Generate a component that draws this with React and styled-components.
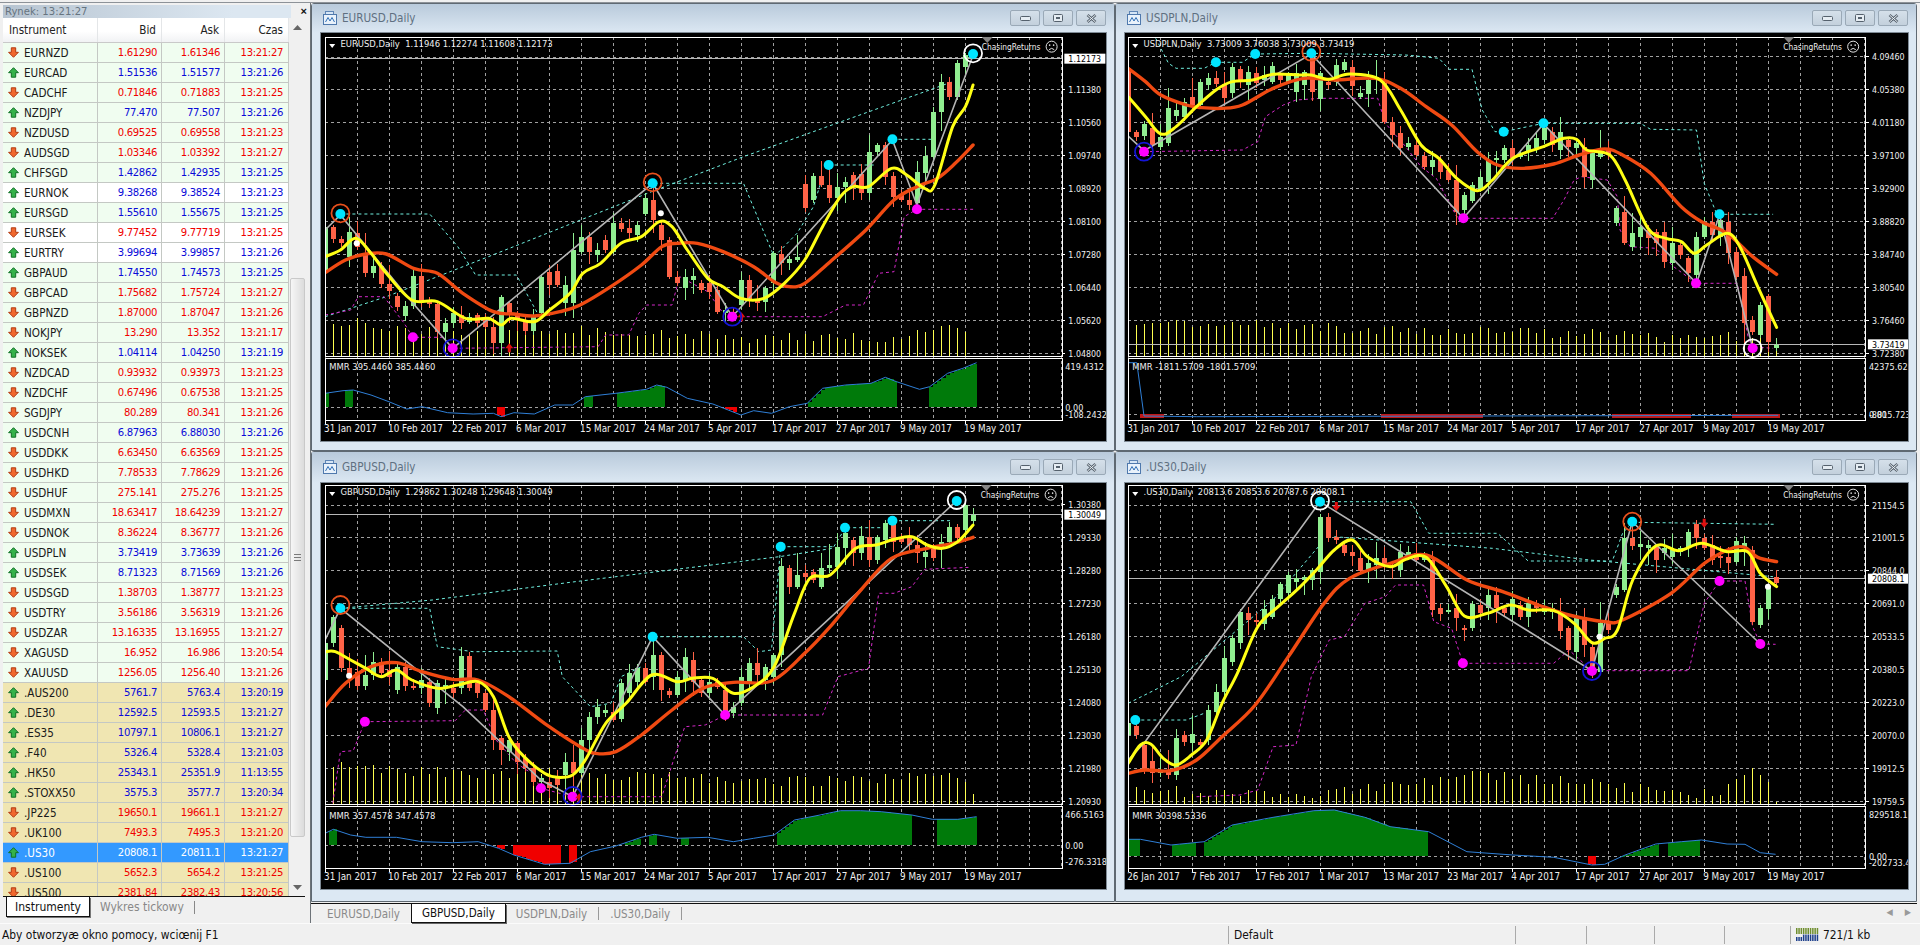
import React from 'react';
import styled, { createGlobalStyle } from 'styled-components';

const FONT = '"DejaVu Sans Condensed", "DejaVu Sans", "Liberation Sans", sans-serif';

const GlobalStyle = createGlobalStyle`
    html, body {
        margin: 0;
        padding: 0;
        background: #f0f0f0;
        overflow: hidden;
    }
    body {
        font-family: ${FONT};
        font-stretch: condensed;
    }
`;

const quotes = [
    ['EURNZD', '1.61290', '1.61346', '13:21:27', 'd', 'g'],
    ['EURCAD', '1.51536', '1.51577', '13:21:26', 'u', 'g'],
    ['CADCHF', '0.71846', '0.71883', '13:21:25', 'd', 'g'],
    ['NZDJPY', '77.470', '77.507', '13:21:26', 'u', 'g'],
    ['NZDUSD', '0.69525', '0.69558', '13:21:23', 'd', 'g'],
    ['AUDSGD', '1.03346', '1.03392', '13:21:27', 'd', 'g'],
    ['CHFSGD', '1.42862', '1.42935', '13:21:25', 'u', 'g'],
    ['EURNOK', '9.38268', '9.38524', '13:21:23', 'u', 'w'],
    ['EURSGD', '1.55610', '1.55675', '13:21:25', 'u', 'g'],
    ['EURSEK', '9.77452', '9.77719', '13:21:25', 'd', 'w'],
    ['EURTRY', '3.99694', '3.99857', '13:21:26', 'u', 'w'],
    ['GBPAUD', '1.74550', '1.74573', '13:21:25', 'u', 'g'],
    ['GBPCAD', '1.75682', '1.75724', '13:21:27', 'd', 'g'],
    ['GBPNZD', '1.87000', '1.87047', '13:21:26', 'd', 'g'],
    ['NOKJPY', '13.290', '13.352', '13:21:17', 'd', 'g'],
    ['NOKSEK', '1.04114', '1.04250', '13:21:19', 'u', 'g'],
    ['NZDCAD', '0.93932', '0.93973', '13:21:23', 'd', 'g'],
    ['NZDCHF', '0.67496', '0.67538', '13:21:25', 'd', 'g'],
    ['SGDJPY', '80.289', '80.341', '13:21:26', 'd', 'g'],
    ['USDCNH', '6.87963', '6.88030', '13:21:26', 'u', 'g'],
    ['USDDKK', '6.63450', '6.63569', '13:21:25', 'd', 'g'],
    ['USDHKD', '7.78533', '7.78629', '13:21:26', 'd', 'g'],
    ['USDHUF', '275.141', '275.276', '13:21:25', 'd', 'g'],
    ['USDMXN', '18.63417', '18.64239', '13:21:27', 'd', 'g'],
    ['USDNOK', '8.36224', '8.36777', '13:21:26', 'd', 'g'],
    ['USDPLN', '3.73419', '3.73639', '13:21:26', 'u', 'g'],
    ['USDSEK', '8.71323', '8.71569', '13:21:26', 'u', 'g'],
    ['USDSGD', '1.38703', '1.38777', '13:21:23', 'd', 'g'],
    ['USDTRY', '3.56186', '3.56319', '13:21:26', 'd', 'g'],
    ['USDZAR', '13.16335', '13.16955', '13:21:27', 'd', 'g'],
    ['XAGUSD', '16.952', '16.986', '13:20:54', 'd', 'g'],
    ['XAUUSD', '1256.05', '1256.40', '13:21:26', 'd', 'g'],
    ['.AUS200', '5761.7', '5763.4', '13:20:19', 'u', 't'],
    ['.DE30', '12592.5', '12593.5', '13:21:27', 'u', 't'],
    ['.ES35', '10797.1', '10806.1', '13:21:27', 'u', 't'],
    ['.F40', '5326.4', '5328.4', '13:21:03', 'u', 't'],
    ['.HK50', '25343.1', '25351.9', '11:13:55', 'u', 't'],
    ['.STOXX50', '3575.3', '3577.7', '13:20:34', 'u', 't'],
    ['.JP225', '19650.1', '19661.1', '13:21:27', 'd', 't'],
    ['.UK100', '7493.3', '7495.3', '13:21:20', 'd', 't'],
    ['.US30', '20808.1', '20811.1', '13:21:27', 'u', 's'],
    ['.US100', '5652.3', '5654.2', '13:21:25', 'd', 't'],
    ['.US500', '2381.84', '2382.43', '13:20:56', 'd', 't'],
];

const DATES_A = ['31 Jan 2017', '10 Feb 2017', '22 Feb 2017', '6 Mar 2017', '15 Mar 2017', '24 Mar 2017', '5 Apr 2017', '17 Apr 2017', '27 Apr 2017', '9 May 2017', '19 May 2017'];
const DATES_B = ['26 Jan 2017', '7 Feb 2017', '17 Feb 2017', '1 Mar 2017', '13 Mar 2017', '23 Mar 2017', '4 Apr 2017', '17 Apr 2017', '27 Apr 2017', '9 May 2017', '19 May 2017'];

// every coordinate below is taken from 3x crops, so x is divided by 1.96 and y by 3 when drawn
const charts = {
    eurusd: {
        title: 'EURUSD,Daily',
        legend: 'EURUSD,Daily  1.11946 1.12274 1.11608 1.12173',
        view: '1 3 785 408',
        height: 408,
        left: 10,
        right: 1455,
        top: 22,
        mainBottom: 978,
        subTop: 985,
        subBottom: 1170,
        chasing: [1297, 50],
        prices: [[1.1138, 178], [1.1056, 278], [1.0974, 377], [1.0892, 476], [1.081, 575], [1.0728, 674], [1.0644, 772], [1.0562, 871], [1.048, 970]].map(([p, y]) => [p.toFixed(5), y]),
        gridY: [82, 178, 278, 377, 476, 575, 674, 772, 871, 970],
        last: ['1.12173', 86],
        dates: DATES_A,
        mmr: 'MMR 395.4460 385.4460',
        subLabels: [['419.4312', 1008], ['0.00', 1132], ['-108.2432', 1152]],
        zero: 1132,
        candles: 'g 590 720,r 590 628,r 628 640,g 605 680,r 610 650,r 670 730,g 708 728,r 708 762,r 762 782,r 798 830,g 828 858,g 738 828,r 738 812,r 812 822,r 822 905,g 880 905,g 850 880,r 855 878,g 862 875,r 855 880,r 860 890,r 890 940,g 800 940,r 820 850,r 850 865,r 870 902,g 855 902,g 740 850,r 725 765,r 722 765,g 765 820,g 660 820,g 620 665,r 620 665,g 660 675,r 630 660,g 578 665,r 578 598,r 595 610,g 585 615,g 505 552,r 510 570,r 585 630,r 630 740,r 740 760,g 742 775,g 738 750,r 760 780,r 760 785,r 780 845,g 840 850,r 845 855,g 750 825,r 750 810,r 810 818,g 775 815,g 670 760,r 672 700,g 688 698,g 680 690,r 462 535,g 438 510,r 438 465,r 465 505,g 470 505,g 455 470,r 435 470,r 432 490,g 365 490,g 345 365,r 345 440,r 438 500,r 495 510,r 510 525,g 425 520,g 378 430,g 245 380,g 155 245,r 155 200,g 100 200,g 75 110',
        yellow: '10,680 40,660 70,625 100,670 130,730 180,810 230,815 285,865 330,865 355,885 375,865 420,875 450,840 490,790 515,730 550,700 590,640 630,620 665,575 690,590 720,660 760,745 790,770 825,805 870,805 910,760 950,690 985,590 1020,500 1045,470 1075,470 1120,415 1150,435 1185,475 1205,465 1240,290 1265,230 1280,165',
        orange: '10,728 50,690 90,672 130,672 185,716 230,730 280,790 340,845 380,852 420,858 470,845 510,825 570,770 630,705 670,650 700,640 740,640 790,665 850,710 890,755 920,770 950,760 1000,695 1070,600 1125,510 1170,470 1210,445 1245,400 1280,345',
        zigzag: '10,600 40,555 182,820 260,955 652,460 808,860 1122,330 1170,525 1280,75',
        cyan: ['10,860 130,800 330,680 650,485 830,380 1240,155', '40,552 215,552 270,650 305,735 385,735 430,860', '655,460 830,460 890,680', '997,405 1090,405', '1122,328 1205,328', '890,680 935,610 967,530 985,440'],
        magenta: ['10,855 60,840 75,800 125,800 165,880 182,922 240,922', '262,955 545,950 560,915 605,915 625,850 640,825 690,825 705,740 760,785 790,850 808,860 985,860 1030,825 1065,825 1095,730 1125,725 1145,560 1170,538 1280,538'],
        cyanDots: ['40,552', '652,460', '997,405', '1122,328', '1280,72'],
        magentaDots: ['182,922', '260,955', '808,860', '1170,538'],
        whiteDots: ['72,640', '668,550'],
        rings: [['40,550', '#e8501c'], ['652,457', '#e8501c'], ['1280,70', '#ffffff'], ['260,955', '#1414d8'], ['808,860', '#1414d8']],
        arrows: [['371,955', 'u'], ['826,862', 'u']],
        volume: [[0, 865], [10, 895], [24, 905], [40, 900], [50, 925], [56, 925], [70, 920], [78, 885], [80, 905], [81, 948]],
        blue: '10,1090 45,1082 65,1080 100,1095 135,1115 170,1137 200,1130 250,1148 300,1152 340,1150 355,1160 380,1148 420,1152 460,1125 495,1125 520,1100 580,1090 640,1078 660,1065 680,1072 720,1105 770,1122 825,1155 850,1142 885,1150 920,1130 955,1120 985,1075 1030,1065 1080,1060 1108,1042 1130,1055 1175,1078 1195,1070 1230,1030 1260,1015 1287,998',
        green: [[10, 18], [48, 65], [518, 535], [582, 676], [957, 1131], [1194, 1287]],
        red: [[347, 363], [785, 817]],
    },
    usdpln: {
        title: 'USDPLN,Daily',
        legend: 'USDPLN,Daily  3.73009 3.76038 3.73009 3.73419',
        view: '5 3 783 408',
        height: 408,
        left: 16,
        right: 1462,
        top: 22,
        mainBottom: 978,
        subTop: 985,
        subBottom: 1170,
        chasing: [1300, 50],
        prices: [['4.09460', 80], ['4.05380', 179], ['4.01180', 278], ['3.97100', 377], ['3.92900', 476], ['3.88820', 575], ['3.84740', 674], ['3.80540', 773], ['3.76460', 872], ['3.72380', 971]],
        gridY: [80, 179, 278, 377, 476, 575, 674, 773, 872, 971],
        last: ['3.73419', 943],
        dates: DATES_A,
        mmr: 'MMR -1811.5709 -1801.5709',
        subLabels: [['42375.62', 1008], ['0.00', 1152], ['-8815.723', 1152]],
        zero: 1152,
        candles: 'r 115 305,r 305 322,g 282 318,r 295 345,g 320 350,g 235 338,g 240 258,g 215 262,r 200 225,g 155 225,g 145 165,r 145 162,r 162 205,g 110 190,r 118 155,g 125 165,r 130 160,g 135 150,g 108 155,r 130 150,g 135 155,g 130 185,g 125 165,r 85 185,g 130 207,r 155 165,g 105 155,g 95 120,r 110 168,g 190 200,g 150 192,g 140 150,r 160 275,r 275 315,r 310 355,g 338 350,r 345 375,r 378 412,g 390 412,r 390 425,r 420 450,r 450 545,g 495 540,g 465 512,g 440 480,g 390 455,g 385 390,g 355 390,r 355 385,g 370 380,g 345 365,g 325 355,g 295 330,r 305 345,g 305 360,r 330 350,g 340 355,r 350 440,g 370 450,g 365 380,r 360 375,g 535 580,r 545 640,g 610 650,g 590 620,r 600 625,r 605 640,r 605 695,g 640 700,r 645 675,r 685 730,g 620 735,g 575 620,r 575 615,g 570 620,r 575 670,r 665 740,r 738 880,r 870 905,g 825 915,r 798 935,g 945 955',
        yellow: '16,200 50,260 80,312 110,290 150,230 190,178 220,155 260,150 300,133 350,135 375,135 410,148 450,132 510,150 550,240 590,345 625,385 660,445 700,482 730,450 770,385 830,350 870,325 895,328 915,360 960,375 990,450 1035,595 1070,625 1100,635 1125,670 1150,645 1190,610 1215,650 1250,770 1287,892',
        orange: '16,115 50,155 80,195 130,225 160,233 200,235 240,225 300,175 360,145 420,150 500,145 550,175 600,230 650,285 700,365 740,405 790,415 850,402 900,375 950,357 985,375 1040,430 1100,530 1140,575 1190,610 1240,680 1287,733',
        zigzag: '16,318 47,362 375,72 673,565 830,282 1130,760 1175,555 1240,955',
        cyan: ['70,25 95,100 110,115 165,115 188,97 240,97 265,72 375,70 560,75 625,85 645,118 690,118 710,240 735,305 752,305 830,280 1020,280 1040,298 1130,300 1145,460 1170,553 1280,553'],
        magenta: ['47,365 240,360 270,335 285,260 320,225 345,210 395,205 505,205 520,280 560,350 590,410 620,445 660,560 675,565 848,565 870,510 890,450 905,440 955,450 975,500 980,600 1000,650 1050,655 1085,710 1130,760 1210,760 1235,950 1280,955'],
        cyanDots: ['188,97', '265,72', '375,70', '752,305', '830,280', '1175,553'],
        magentaDots: ['47,365', '673,565', '1129,760', '1240,955'],
        whiteDots: [],
        rings: [['47,365', '#1414d8'], ['375,65', '#e8501c'], ['1240,955', '#ffffff']],
        arrows: [],
        volume: [[0, 870], [20, 885], [40, 905], [60, 915], [80, 925], [81, 942]],
        blue: '16,998 33,998 47,1158 150,1160 1290,1156',
        green: [],
        red: [[40, 86], [511, 712], [965, 1120], [1200, 1293]],
        redDepth: 1163,
    },
    gbpusd: {
        title: 'GBPUSD,Daily',
        legend: 'GBPUSD,Daily  1.29862 1.30248 1.29648 1.30049',
        view: '1 3 785 406',
        height: 406,
        left: 10,
        right: 1455,
        top: 16,
        mainBottom: 972,
        subTop: 980,
        subBottom: 1165,
        chasing: [1295, 44],
        prices: [['1.30380', 73], ['1.29330', 173], ['1.28280', 272], ['1.27230', 371], ['1.26180', 470], ['1.25130', 569], ['1.24080', 668], ['1.23030', 767], ['1.21980', 866], ['1.20930', 965]],
        gridY: [75, 173, 272, 371, 470, 569, 668, 767, 866, 965],
        last: ['1.30049', 104],
        dates: DATES_A,
        mmr: 'MMR 357.4578 347.4578',
        subLabels: [['466.5163', 1002], ['0.00', 1097], ['-276.3318', 1145]],
        zero: 1096,
        candles: 'g 490 600,g 410 490,r 445 565,r 565 595,r 575 618,g 585 618,g 545 585,r 545 580,r 570 590,g 560 630,r 560 618,r 618 623,g 600 625,r 605 668,g 610 685,g 615 625,r 625 640,g 528 625,r 528 625,r 610 640,r 640 690,r 690 780,r 775 810,g 780 815,r 790 845,r 835 865,r 865 905,g 895 905,r 905 925,r 890 915,g 845 885,r 845 880,g 780 880,g 710 780,g 680 712,g 690 700,r 695 720,g 610 718,g 580 640,g 565 605,r 565 605,g 525 590,r 525 630,r 633 645,g 590 645,g 530 600,r 540 605,r 600 640,g 605 640,r 605 620,r 630 695,g 680 700,g 590 668,g 548 610,r 548 585,g 560 600,g 525 590,g 258 525,r 265 320,g 285 320,r 280 290,r 275 300,g 265 320,g 255 265,g 200 260,g 160 205,r 180 220,g 168 220,r 170 240,g 170 240,g 128 180,r 130 185,r 175 185,r 170 195,r 195 220,g 215 232,r 205 235,g 185 205,g 140 185,r 140 175,g 75 150,g 105 122',
        yellow: '10,515 30,515 60,540 90,565 120,590 150,570 180,600 230,625 270,615 310,605 340,650 370,770 400,830 440,880 465,892 495,885 520,840 560,730 600,670 650,585 700,605 730,595 770,595 810,640 850,620 890,560 930,400 960,295 1000,285 1050,205 1090,195 1125,178 1160,170 1190,195 1220,205 1250,185 1280,135',
        orange: '10,680 50,610 100,560 150,548 200,575 260,598 310,600 370,650 440,730 510,800 540,820 580,815 630,765 690,690 750,625 810,607 885,603 950,520 1000,440 1060,330 1120,235 1190,205 1240,190 1280,172',
        zigzag: '10,480 40,385 280,680 433,900 495,950 652,470 794,705 1248,62',
        cyan: ['40,385 220,360 500,305 900,230 1005,205 1030,143 1100,143', '40,385 215,385 230,500 300,515 465,513 475,590 530,680 570,670 590,590 630,560', '655,470 830,470 860,515 885,510 903,200 1005,200', '1123,122 1240,122'],
        magenta: ['25,970 40,815 65,812 88,725 265,722 285,690 320,690 345,780 385,850 415,880 433,925 495,950 670,950 695,830 715,740 755,735 795,705 985,705 1015,590 1075,565 1095,340 1125,340 1160,320 1185,268 1275,262'],
        cyanDots: ['40,385', '652,470', '903,200', '1029,143', '1122,122', '1248,63'],
        magentaDots: ['88,725', '433,925', '495,950', '794,705'],
        whiteDots: ['57,587'],
        rings: [['40,375', '#e8501c'], ['495,948', '#1414d8'], ['1248,60', '#ffffff']],
        arrows: [['508,955', 'u']],
        volume: [[0, 860], [20, 880], [40, 885], [60, 905], [78, 880], [80, 905], [81, 942]],
        blue: '10,1060 26,1048 60,1065 90,1072 150,1072 200,1085 260,1088 310,1085 350,1105 380,1125 440,1153 490,1150 530,1115 580,1098 630,1072 655,1063 700,1075 760,1072 810,1085 850,1075 890,1065 930,1020 980,1005 1020,992 1060,992 1100,995 1160,1005 1200,1018 1250,1018 1287,1010',
        green: [[18, 33], [598, 629], [645, 661], [707, 723], [895, 1161], [1210, 1287]],
        red: [[347, 363], [379, 472], [488, 504]],
    },
    us30: {
        title: '.US30,Daily',
        legend: '.US30,Daily  20813.6 20853.6 20787.6 20808.1',
        view: '5 3 783 406',
        height: 406,
        left: 16,
        right: 1462,
        top: 16,
        mainBottom: 972,
        subTop: 980,
        subBottom: 1165,
        chasing: [1300, 44],
        prices: [['21154.5', 75], ['21001.5', 173], ['20844.0', 272], ['20691.0', 371], ['20533.5', 470], ['20380.5', 569], ['20223.0', 668], ['20070.0', 767], ['19912.5', 866], ['19759.5', 965]],
        gridY: [75, 173, 272, 371, 470, 569, 668, 767, 866, 965],
        last: ['20808.1', 296],
        dates: DATES_B,
        mmr: 'MMR 30398.5336',
        subLabels: [['829518.1', 1002], ['0.00', 1130], ['-202733.4', 1146]],
        zero: 1129,
        candles: 'g 730 765,r 738 765,r 795 870,r 842 880,g 870 880,r 870 885,g 775 885,r 765 785,g 762 788,r 785 795,g 690 780,g 635 695,g 535 635,g 475 545,g 395 490,r 398 420,r 420 425,g 388 432,g 358 410,g 312 358,g 285 340,g 295 305,g 290 300,g 270 300,g 110 275,r 110 175,r 170 180,r 195 220,r 215 228,r 235 272,g 250 270,g 235 255,r 235 260,r 255 260,g 215 270,g 215 225,r 220 240,g 228 240,r 240 390,r 385 402,g 390 395,r 385 415,r 445 450,g 372 445,r 375 400,g 345 385,r 345 385,r 385 400,g 358 405,r 375 412,g 370 412,r 375 385,g 385 395,g 385 395,r 400 452,r 445 510,g 408 515,r 410 495,r 500 570,g 430 575,r 425 450,g 320 345,g 175 330,r 175 197,g 192 200,g 195 205,r 200 240,g 205 220,g 210 230,g 205 215,g 155 205,r 132 175,r 175 205,r 195 240,r 228 235,r 230 250,g 183 245,g 190 200,r 210 425,g 385 435,g 318 388,r 290 310',
        yellow: '16,850 40,795 60,792 85,835 110,855 140,825 170,780 200,670 230,580 270,440 310,380 350,325 385,270 420,210 455,180 485,230 530,260 560,238 600,232 640,320 675,408 720,400 765,375 800,390 850,392 890,430 925,488 950,475 975,450 1005,300 1050,198 1095,212 1140,190 1190,215 1230,215 1255,280 1287,320',
        orange: '16,880 50,870 100,872 150,840 200,770 265,675 330,530 400,370 450,295 530,250 600,225 680,300 750,335 820,375 880,405 950,425 985,420 1080,340 1150,245 1215,200 1250,232 1287,245',
        zigzag: '16,840 47,790 392,65 925,572 1004,125 1255,492',
        cyan: ['16,670 120,590 300,360 400,180', '30,720 130,720 165,700', '392,65 570,65 605,160 740,160 800,243 965,243 985,160 1004,127 1285,133', '420,170 730,205 920,240 1100,265 1280,290'],
        magenta: ['150,950 235,945 270,930 300,800 345,795 375,590 410,480 440,470 480,370 520,350 540,315 595,315 615,425 650,445 672,550 850,550 880,510 925,572 1115,572 1145,370 1175,303 1225,303 1240,440 1255,492 1285,493'],
        cyanDots: ['30,720', '392,65', '1004,125'],
        magentaDots: ['672,550', '925,573', '1175,303', '1255,492'],
        whiteDots: ['940,470', '1270,320'],
        rings: [['392,62', '#ffffff'], ['1004,125', '#e8501c'], ['925,573', '#1414d8']],
        arrows: [['424,78', 'd'], ['1145,128', 'd']],
        volume: [[0, 935], [24, 940], [36, 910], [42, 880], [56, 905], [66, 930], [74, 945], [78, 865], [80, 905], [81, 965]],
        blue: '16,1078 40,1078 100,1095 165,1085 220,1035 300,1012 380,992 420,990 480,1012 530,1040 605,1055 680,1115 770,1125 850,1132 925,1155 950,1153 990,1125 1050,1092 1100,1085 1140,1080 1190,1092 1225,1093 1255,1118 1285,1123',
        green: [[16, 39], [102, 149], [164, 604], [982, 1057], [1074, 1137]],
        red: [[917, 933]],
    },
};

const STEP = 15.68;
const rx = (x) => x / 1.96;
const ry = (y) => y / 3;
const parsePts = (s) => s.split(' ').map((p) => p.split(',').map(Number));
const toReal = (pts) => pts.map(([x, y]) => [rx(x), ry(y)]);
const flat = (pts) => pts.map((p) => p.map((n) => n.toFixed(1)).join(',')).join(' ');

const rnd = (i, s) => {
    const v = Math.sin(i * 12.9898 + s * 78.233) * 43758.5453;
    return v - Math.floor(v);
};

// catmull-rom through the read off points, the indicator lines are smooth in the picture
const smooth = (pts) =>
    pts.reduce((d, p, i) => {
        if (i === 0) return `M${p[0]} ${p[1]}`;
        const p0 = pts[i - 2] || pts[i - 1];
        const p1 = pts[i - 1];
        const p3 = pts[i + 1] || p;
        const c1 = [p1[0] + (p[0] - p0[0]) / 6, p1[1] + (p[1] - p0[1]) / 6];
        const c2 = [p[0] - (p3[0] - p1[0]) / 6, p[1] - (p3[1] - p1[1]) / 6];
        return `${d}C${c1[0]} ${c1[1]} ${c2[0]} ${c2[1]} ${p[0]} ${p[1]}`;
    }, '');

const interp = (pts, x) => {
    for (let i = 1; i < pts.length; i++) {
        if (x <= pts[i][0]) {
            const [x0, y0] = pts[i - 1];
            const [x1, y1] = pts[i];
            return y0 + ((y1 - y0) * (x - x0)) / (x1 - x0);
        }
    }
    return pts[pts.length - 1][1];
};

const volumeTop = (anchors, i) => {
    const base = interp(anchors, i);
    if (i >= 78) return base;
    return base + (rnd(i, anchors[0][1]) - 0.5) * 34;
};

const Page = styled.div`
    width: 1920px;
    height: 945px;
    display: flex;
    flex-direction: column;
    background: #f0f0f0;
    overflow: hidden;
    color: #000;
`;

const TopEdge = styled.div`
    height: 3px;
    flex: none;
    background: linear-gradient(#f0f0f0 0 2px, #8d9298 2px);
`;

const Workspace = styled.div`
    flex: none;
    height: 920px;
    display: flex;
`;

const MarketPanel = styled.aside`
    width: 311px;
    flex: none;
    display: flex;
    flex-direction: column;
    padding: 2px 7px 0 3px;
    box-sizing: border-box;
    background: #f0f0f0;
    border-right: 1px solid #6d7378;
`;

const PanelTitle = styled.div`
    height: 13px;
    flex: none;
    display: flex;
    align-items: center;
    justify-content: space-between;
    padding-left: 2px;
    font-size: 11.2px;
    color: #66747f;
    background: linear-gradient(90deg, #b7c4d1, #dce7f1 80%);
    margin-right: 12px;
    position: relative;
`;

const PanelClose = styled.span`
    position: absolute;
    right: -16px;
    top: 0;
    font: bold 11px "Liberation Sans", sans-serif;
    color: #111;
`;

const PanelBody = styled.div`
    flex: none;
    height: 878px;
    display: flex;
    margin-top: 0;
`;

const Table = styled.div`
    width: 286px;
    flex: none;
    overflow: hidden;
    background: #fff;
    border-left: 0;
`;

const HeaderRow = styled.div`
    height: 25px;
    display: grid;
    grid-template-columns: 95px 64px 63px 64px;
    background: linear-gradient(#fff 55%, #f1f2f4);
    border-bottom: 1px solid #c9c9c9;
    box-sizing: border-box;
`;

const HeaderCell = styled.div`
    display: flex;
    align-items: center;
    justify-content: ${(p) => (p.$left ? 'flex-start' : 'flex-end')};
    padding: 0 5px 0 6px;
    font-size: 11.6px;
    color: #222;
    border-right: 1px solid #e4e6e8;
`;

const rowBg = { g: '#f0fdf0', w: '#ffffff', t: '#f0e6b2', s: '#3399ff' };

const Row = styled.div`
    height: 20px;
    display: grid;
    grid-template-columns: 95px 64px 63px 64px;
    box-sizing: border-box;
    border-bottom: 1px solid #c4c8c4;
    background: ${(p) => rowBg[p.$bg]};
`;

const NameCell = styled.div`
    display: flex;
    align-items: center;
    gap: 5px;
    padding-left: 5px;
    font-size: 11.6px;
    color: ${(p) => (p.$sel ? '#fff' : '#1a1a1a')};
    border-right: 1px solid #c4c8c4;
`;

const ValueCell = styled.div`
    display: flex;
    align-items: center;
    justify-content: flex-end;
    padding-right: ${(p) => p.$pad || 4}px;
    font-size: 11.2px;
    letter-spacing: -0.35px;
    color: ${(p) => (p.$sel ? '#fff' : p.$dir === 'u' ? '#0a0ad8' : '#f00000')};
    border-right: 1px solid #c4c8c4;
`;

const ScrollTrack = styled.div`
    width: 15px;
    flex: none;
    margin-left: 1px;
    display: flex;
    flex-direction: column;
    align-items: stretch;
    background: #f0f0f0;
`;

const ScrollArrow = styled.div`
    height: 18px;
    flex: none;
    display: flex;
    align-items: center;
    justify-content: center;
    margin-top: ${(p) => p.$mt || 0}px;
`;

const ScrollThumb = styled.div`
    flex: none;
    height: 559px;
    margin-top: 242px;
    display: flex;
    align-items: center;
    justify-content: center;
    box-sizing: border-box;
    border: 1px solid #c9c9c9;
    border-radius: 2px;
    background: linear-gradient(90deg, #f6f6f6, #dcdcdc);
`;

const Grip = styled.div`
    width: 7px;
    height: 7px;
    background: repeating-linear-gradient(#7a7a7a 0 1px, transparent 1px 3px);
`;

const PanelTabs = styled.div`
    height: 20px;
    flex: none;
    display: flex;
    align-items: center;
    border-top: 1px solid #111;
    margin-right: -2px;
`;

const PanelTab = styled.div`
    height: 20px;
    box-sizing: border-box;
    display: flex;
    align-items: center;
    font-size: 12px;
    ${(p) =>
        p.$active
            ? `margin-left: 3px; width: 84px; justify-content: center; background: #fff; border: 1px solid #111; border-top: 0; box-shadow: 1px 1px 0 #777; color: #111;`
            : `margin-left: 10px; padding-right: 10px; color: #888; border-right: 1px solid #888; height: 13px;`}
`;

const Mdi = styled.main`
    flex: none;
    width: 1606px;
    display: flex;
    flex-direction: column;
`;

const WindowGrid = styled.div`
    flex: none;
    display: grid;
    grid-template-columns: 804px 802px;
    grid-template-rows: 448px 451px;
`;

const Window = styled.section`
    display: flex;
    flex-direction: column;
    box-sizing: border-box;
    border: 1px solid #5f6972;
    border-radius: 3px 3px 0 0;
    padding: 0 8px 0 9px;
    background: #dce8f3;
`;

const TitleBar = styled.div`
    height: ${(p) => (p.$tall ? 31 : 29)}px;
    flex: none;
    margin: 0 -8px 0 -9px;
    padding: 0 8px 1px 11px;
    box-sizing: border-box;
    display: flex;
    align-items: center;
    gap: 5px;
    background: linear-gradient(#b9cadb, #dce8f3);
`;

const TitleText = styled.span`
    flex: 1;
    font-size: 11.6px;
    color: #5f7081;
`;

const WinButton = styled.div`
    width: 30px;
    height: 16px;
    margin-left: -2px;
    display: flex;
    align-items: center;
    justify-content: center;
    box-sizing: border-box;
    border: 1px solid #9aa9b7;
    border-radius: 2px;
    background: linear-gradient(#d5e0ea, #c3d0dc);
`;

const Canvas = styled.div`
    flex: none;
    height: ${(p) => p.$h}px;
    background: #000;
    overflow: hidden;
    border-top: 0;
    box-shadow: 0 0 0 1px #7f8b96;
`;

const ChartSvg = styled.svg`
    display: block;
    width: 100%;
    height: 100%;
    font-family: ${FONT};
    font-stretch: condensed;
`;

const ChartText = styled.text`
    font-size: ${(p) => p.$size || 9.4}px;
    fill: ${(p) => p.$fill || '#efefef'};
    white-space: pre;
`;

const TabStrip = styled.nav`
    height: 21px;
    flex: none;
    display: flex;
    align-items: flex-start;
    padding-left: 16px;
    position: relative;
    border-top: 1px solid #111;
    box-sizing: content-box;
    margin-top: 1px;
`;

const DocTab = styled.div`
    height: 19px;
    display: flex;
    align-items: center;
    font-size: 11.5px;
    box-sizing: border-box;
    ${(p) =>
        p.$active
            ? `padding: 0 10px; margin: 0 10px 0 11px; background: #fff; color: #111; border: 1px solid #111; border-top: 0; box-shadow: 1px 1px 0 #666;`
            : `color: #8a8a8a;`}
`;

const DocSep = styled.div`
    width: 1px;
    height: 13px;
    margin: 3px 11px 0;
    background: #999;
`;

const TabArrows = styled.div`
    position: absolute;
    right: 6px;
    top: 3px;
    display: flex;
    gap: 12px;
    font-size: 9px;
    color: #9a9a9a;
`;

const StatusBar = styled.footer`
    flex: none;
    height: 22px;
    display: flex;
    align-items: center;
    font-size: 11.9px;
    color: #111;
    border-top: 1px solid #fbfbfb;
    box-sizing: border-box;
`;

const StatusCell = styled.div`
    height: 18px;
    display: flex;
    align-items: center;
    gap: 4px;
    width: ${(p) => p.$w}px;
    flex: none;
    padding-left: ${(p) => p.$pad || 0}px;
    box-sizing: border-box;
    border-left: ${(p) => (p.$noBorder ? '0' : '1px solid #aaa')};
`;

const QuoteArrow = ({ dir }) => (
    <svg width="11" height="11" viewBox="0 0 11 11">
        {dir === 'u' ? (
            <path d="M5.5 .7 10.4 5.7H7.7V10.2H3.3V5.7H.6Z" fill="#35b24a" stroke="#0f6f25" strokeWidth="1" />
        ) : (
            <path d="M3.3 .8H7.7V5.3H10.4L5.5 10.3 .6 5.3H3.3Z" fill="#f0682e" stroke="#b23a12" strokeWidth="1" />
        )}
    </svg>
);

const ChartIcon = () => (
    <svg width="14" height="14" viewBox="0 0 14 14">
        <rect x="2.5" y=".5" width="8" height="6" fill="#d6e6f6" stroke="#5f86b6" />
        <rect x=".5" y="3.5" width="13" height="10" fill="#e9f2fb" stroke="#4f79ad" />
        <path d="M2.5 11 5 6.5 7 10 9 6.5 11.5 11" fill="none" stroke="#2f6fb6" />
    </svg>
);

const MinIcon = () => (
    <svg width="11" height="5" viewBox="0 0 11 5">
        <rect x=".5" y=".5" width="10" height="4" rx="1" fill="#e6edf3" stroke="#55616d" />
    </svg>
);

const RestoreIcon = () => (
    <svg width="10" height="8" viewBox="0 0 10 8">
        <rect x=".5" y=".5" width="9" height="7" rx="1" fill="#e6edf3" stroke="#55616d" />
        <rect x="3" y="3" width="4" height="2" fill="#55616d" />
    </svg>
);

const CloseIcon = () => (
    <svg width="11" height="9" viewBox="0 0 11 9">
        <path d="M1.5 1 9.5 8M9.5 1 1.5 8" stroke="#55616d" strokeWidth="2.6" />
        <path d="M1.5 1 9.5 8M9.5 1 1.5 8" stroke="#eef3f7" strokeWidth="1" />
    </svg>
);

const TrafficIcon = () => (
    <svg width="23" height="13" viewBox="0 0 23 13">
        {Array.from({ length: 10 }).map((_, i) => (
            <g key={i}>
                <rect x={i * 2.3} y="0" width="1.5" height="6" fill="#6f8e2e" />
                <rect x={i * 2.3} y={i < 3 ? 9 : 6.5} width="1.5" height={i < 3 ? 4 : 6.5} fill="#1d3f8c" />
            </g>
        ))}
    </svg>
);

const Chart = ({ id, data }) => {
    const plotLeft = rx(data.left);
    const plotRight = rx(data.right);
    const top = ry(data.top);
    const mainBottom = ry(data.mainBottom);
    const subTop = ry(data.subTop);
    const subBottom = ry(data.subBottom);

    const gridX = [];
    for (let x = data.left; x < data.right; x += STEP * 4) {
        gridX.push(rx(x));
    }

    const candles = data.candles.split(',').map((c, i) => {
        const [dir, t, b] = c.split(' ');
        const up = rnd(i, 3) * rnd(i, 11) * 60 + 6;
        const down = rnd(i, 5) * rnd(i, 13) * 60 + 6;
        const x = Math.round(rx(data.left + STEP * i));
        return { dir, x, top: ry(+t), bottom: ry(+b), high: ry(+t - up), low: ry(+b + down) };
    });

    const bluePts = parsePts(data.blue);

    // histogram is stepped, one flat bar every 4 real px
    const histo = (range, color) => {
        const depth = color === 'red' && data.redDepth;
        const pts = [[range[0], data.zero]];
        for (let x = range[0]; x < range[1]; x += 8) {
            const y = depth || interp(bluePts, x);
            pts.push([x, y], [Math.min(x + 8, range[1]), y]);
        }
        pts.push([range[1], data.zero]);
        return flat(toReal(pts));
    };

    const mainClip = `${id}-main`;
    const subClip = `${id}-sub`;
    const [chasingX, chasingY] = data.chasing;
    const [vbX, vbY, vbW, vbH] = data.view.split(' ').map(Number);

    return (
        <ChartSvg viewBox={data.view} preserveAspectRatio="xMinYMin">
            <defs>
                <clipPath id={mainClip}>
                    <rect x={plotLeft} y={top} width={plotRight - plotLeft} height={mainBottom - top} />
                </clipPath>
                <clipPath id={subClip}>
                    <rect x={plotLeft} y={subTop} width={plotRight - plotLeft} height={subBottom - subTop} />
                </clipPath>
            </defs>
            <rect x={vbX} y={vbY} width={vbW} height={vbH} fill="#000" />

            <g stroke="#a0a0a0" strokeDasharray="3 3" shapeRendering="crispEdges">
                {gridX.map((x) => (
                    <line key={x} x1={x} x2={x} y1={top} y2={subBottom} />
                ))}
                {data.gridY.map((y) => (
                    <line key={y} x1={plotLeft} x2={plotRight} y1={ry(y)} y2={ry(y)} />
                ))}
                <line x1={plotLeft} x2={plotRight} y1={ry(data.zero)} y2={ry(data.zero)} />
            </g>

            <g clipPath={`url(#${mainClip})`}>
                <g stroke="#ffff50" shapeRendering="crispEdges">
                    {candles.map((c, i) => {
                        const t = ry(volumeTop(data.volume, i));
                        return <line key={i} x1={c.x + 0.5} x2={c.x + 0.5} y1={t} y2={mainBottom} />;
                    })}
                </g>
                <line x1={plotLeft} x2={plotRight} y1={ry(data.last[1])} y2={ry(data.last[1])} stroke="#b8b8b8" shapeRendering="crispEdges" />
                <g fill="none" stroke="#70f0e0" strokeWidth="1" strokeDasharray="3 3">
                    {data.cyan.map((s, i) => (
                        <polyline key={i} points={flat(toReal(parsePts(s)))} />
                    ))}
                </g>
                <g fill="none" stroke="#d428c8" strokeWidth="1" strokeDasharray="3 3">
                    {data.magenta.map((s, i) => (
                        <polyline key={i} points={flat(toReal(parsePts(s)))} />
                    ))}
                </g>
                <g shapeRendering="crispEdges">
                    {candles.map((c, i) => {
                        const color = c.dir === 'g' ? '#90ee90' : '#ff6347';
                        return (
                            <g key={i}>
                                <rect x={c.x} y={c.high} width="1" height={Math.max(c.low - c.high, 1)} fill={color} />
                                <rect x={c.x - 2} y={c.top} width="5" height={Math.max(c.bottom - c.top, 1)} fill={color} />
                            </g>
                        );
                    })}
                </g>
                <polyline points={flat(toReal(parsePts(data.zigzag)))} fill="none" stroke="#b4b4b4" strokeWidth="1.6" />
                <path d={smooth(toReal(parsePts(data.orange)))} fill="none" stroke="#f04a12" strokeWidth="3.4" strokeLinecap="round" />
                <path d={smooth(toReal(parsePts(data.yellow)))} fill="none" stroke="#ffff14" strokeWidth="3" strokeLinecap="round" />
                {data.cyanDots.map((s) => {
                    const [[x, y]] = toReal(parsePts(s));
                    return <circle key={s} cx={x} cy={y} r="5" fill="#00e5ff" />;
                })}
                {data.magentaDots.map((s) => {
                    const [[x, y]] = toReal(parsePts(s));
                    return <circle key={s} cx={x} cy={y} r="5" fill="#ff00ff" />;
                })}
                {data.whiteDots.map((s) => {
                    const [[x, y]] = toReal(parsePts(s));
                    return <circle key={s} cx={x} cy={y} r="3" fill="#fff" />;
                })}
                {data.arrows.map(([s, dir]) => {
                    const [[x, y]] = toReal(parsePts(s));
                    const d = dir === 'u' ? `M${x} ${y - 5}l4 5h-2.5v4h-3v-4h-2.5z` : `M${x} ${y + 5}l4 -5h-2.5v-4h-3v4h-2.5z`;
                    return <path key={s} d={d} fill="#e01010" />;
                })}
            </g>
            {data.rings.map(([s, color]) => {
                const [[x, y]] = toReal(parsePts(s));
                return <circle key={s} cx={x} cy={y} r="9" fill="none" stroke={color} strokeWidth="1.8" />;
            })}

            <g clipPath={`url(#${subClip})`}>
                {data.green.map((r, i) => (
                    <polygon key={i} points={histo(r, 'green')} fill="#007a0a" shapeRendering="crispEdges" />
                ))}
                {data.red.map((r, i) => (
                    <polygon key={i} points={histo(r, 'red')} fill={data.redDepth ? '#c01818' : '#f00000'} shapeRendering="crispEdges" />
                ))}
                <polyline points={flat(toReal(bluePts))} fill="none" stroke="#2f7fd6" strokeWidth="1" />
            </g>

            <g fill="none" stroke="#fff" shapeRendering="crispEdges">
                <rect x={plotLeft} y={top} width={plotRight - plotLeft} height={mainBottom - top} />
                <rect x={plotLeft} y={subTop} width={plotRight - plotLeft} height={subBottom - subTop} />
            </g>

            <path d={`M${rx(data.left + 8)} ${ry(data.top + 20)}h6l-3 4z`} fill="#fff" />
            <ChartText x={rx(data.left + 30)} y={ry(data.top + 30)}>{data.legend}</ChartText>
            <ChartText x={rx(data.left + 8)} y={ry(data.subTop + 36)}>{data.mmr}</ChartText>

            <path d={`M${rx(chasingX)} ${ry(data.top - 1)}h11l-5.5 6z`} fill="#858585" />
            <ChartText x={rx(chasingX)} y={ry(chasingY + 9)} $size={8.3}>ChasingReturns</ChartText>
            <g fill="none" stroke="#e4e4e4">
                <circle cx={rx(chasingX + 137)} cy={ry(chasingY)} r="5.5" />
                <path d={`M${rx(chasingX + 137) - 2.6} ${ry(chasingY) + 3}q2.6 -2.6 5.2 0`} />
            </g>
            <circle cx={rx(chasingX + 137) - 2} cy={ry(chasingY) - 1.5} r=".8" fill="#e4e4e4" />
            <circle cx={rx(chasingX + 137) + 2} cy={ry(chasingY) - 1.5} r=".8" fill="#e4e4e4" />

            {data.prices.map(([label, y]) => (
                <g key={label}>
                    <line x1={plotRight} x2={plotRight + 3} y1={ry(y)} y2={ry(y)} stroke="#fff" shapeRendering="crispEdges" />
                    <ChartText x={plotRight + 6} y={ry(y) + 3.5} $size={8.8}>{label}</ChartText>
                </g>
            ))}
            <rect x={plotRight + 2} y={ry(data.last[1]) - 5} width="41" height="10" fill="#fff" />
            <ChartText x={plotRight + 6} y={ry(data.last[1]) + 3.5} $fill="#000" $size={8.8}>{data.last[0]}</ChartText>

            {data.subLabels.map(([label, y]) => (
                <ChartText key={label} x={plotRight + 3} y={ry(y) + 3.5} $size={9}>{label}</ChartText>
            ))}

            {data.dates.map((label, i) => {
                const x = rx(data.left + STEP * 8 * i);
                return (
                    <g key={label}>
                        <line x1={x} x2={x} y1={subBottom} y2={subBottom + 4} stroke="#fff" shapeRendering="crispEdges" />
                        <ChartText x={x - 1} y={subBottom + 12} $size={9.8}>{label}</ChartText>
                    </g>
                );
            })}
        </ChartSvg>
    );
};

const ChartWindow = ({ id, tall }) => {
    const data = charts[id];

    return (
        <Window>
            <TitleBar $tall={tall}>
                <ChartIcon />
                <TitleText>{data.title}</TitleText>
                <WinButton><MinIcon /></WinButton>
                <WinButton><RestoreIcon /></WinButton>
                <WinButton><CloseIcon /></WinButton>
            </TitleBar>
            <Canvas $h={data.height}>
                <Chart id={id} data={data} />
            </Canvas>
        </Window>
    );
};

const App = () => (
    <Page>
        <GlobalStyle />
        <TopEdge />
        <Workspace>
            <MarketPanel>
                <PanelTitle>
                    Rynek: 13:21:27
                    <PanelClose>×</PanelClose>
                </PanelTitle>
                <PanelBody>
                    <Table>
                        <HeaderRow>
                            <HeaderCell $left>Instrument</HeaderCell>
                            <HeaderCell>Bid</HeaderCell>
                            <HeaderCell>Ask</HeaderCell>
                            <HeaderCell>Czas</HeaderCell>
                        </HeaderRow>
                        {quotes.map(([name, bid, ask, time, dir, bg]) => (
                            <Row key={name} $bg={bg}>
                                <NameCell $sel={bg === 's'}>
                                    <QuoteArrow dir={dir} />
                                    {name}
                                </NameCell>
                                <ValueCell $dir={dir} $sel={bg === 's'}>{bid}</ValueCell>
                                <ValueCell $dir={dir} $sel={bg === 's'}>{ask}</ValueCell>
                                <ValueCell $dir={dir} $sel={bg === 's'} $pad={5}>{time}</ValueCell>
                            </Row>
                        ))}
                    </Table>
                    <ScrollTrack>
                        <ScrollArrow>
                            <svg width="9" height="5" viewBox="0 0 9 5"><path d="M4.5 0 9 5H0Z" fill="#666" /></svg>
                        </ScrollArrow>
                        <ScrollThumb><Grip /></ScrollThumb>
                        <ScrollArrow $mt={41}>
                            <svg width="9" height="5" viewBox="0 0 9 5"><path d="M4.5 5 9 0H0Z" fill="#666" /></svg>
                        </ScrollArrow>
                    </ScrollTrack>
                </PanelBody>
                <PanelTabs>
                    <PanelTab $active>Instrumenty</PanelTab>
                    <PanelTab>Wykres tickowy</PanelTab>
                </PanelTabs>
            </MarketPanel>
            <Mdi>
                <WindowGrid>
                    <ChartWindow id="eurusd" />
                    <ChartWindow id="usdpln" />
                    <ChartWindow id="gbpusd" tall />
                    <ChartWindow id="us30" tall />
                </WindowGrid>
                <TabStrip>
                    <DocTab>EURUSD,Daily</DocTab>
                    <DocTab $active>GBPUSD,Daily</DocTab>
                    <DocTab>USDPLN,Daily</DocTab>
                    <DocSep />
                    <DocTab>.US30,Daily</DocTab>
                    <DocSep />
                    <TabArrows><span>◀</span><span>▶</span></TabArrows>
                </TabStrip>
            </Mdi>
        </Workspace>
        <StatusBar>
            <StatusCell $w={1228} $pad={2} $noBorder>Aby otworzyæ okno pomocy, wciœnij F1</StatusCell>
            <StatusCell $w={287} $pad={5}>Default</StatusCell>
            <StatusCell $w={71} />
            <StatusCell $w={68} />
            <StatusCell $w={70} />
            <StatusCell $w={66} />
            <StatusCell $w={130} $pad={5}>
                <TrafficIcon />
                721/1 kb
            </StatusCell>
        </StatusBar>
    </Page>
);

export default App;
